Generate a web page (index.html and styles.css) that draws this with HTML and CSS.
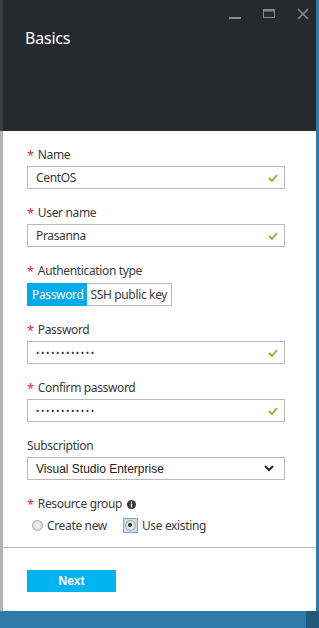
FILE: index.html
```html
<!DOCTYPE html>
<html>
<head>
<meta charset="utf-8">
<link rel="stylesheet" href="styles.css">
</head>
<body>
<div class="blade">
  <header class="head">
    <div class="controls">
      <svg class="ctl" width="14" height="14" viewBox="0 0 14 14"><rect x="1" y="10" width="12" height="2" fill="#85898d"/></svg>
      <svg class="ctl" width="14" height="14" viewBox="0 0 14 14"><rect x="1.5" y="2.5" width="11" height="8" fill="none" stroke="#85898d" stroke-width="1"/><rect x="1" y="2" width="12" height="2.5" fill="#85898d"/></svg>
      <svg class="ctl" width="14" height="14" viewBox="0 0 14 14"><path d="M2 2 L12 12 M12 2 L2 12" stroke="#85898d" stroke-width="1.6"/></svg>
    </div>
    <h1 class="title">Basics</h1>
  </header>
  <main class="body">
    <div class="field">
      <label class="lbl"><span class="req">*</span> Name</label>
      <div class="input"><span class="val">CentOS</span><svg class="ok" width="10" height="8" viewBox="0 0 10 8"><path d="M1 4 L4 7 L9 1" fill="none" stroke="#7cb82f" stroke-width="1.8"/></svg></div>
    </div>
    <div class="field">
      <label class="lbl"><span class="req">*</span> User name</label>
      <div class="input"><span class="val">Prasanna</span><svg class="ok" width="10" height="8" viewBox="0 0 10 8"><path d="M1 4 L4 7 L9 1" fill="none" stroke="#7cb82f" stroke-width="1.8"/></svg></div>
    </div>
    <div class="field">
      <label class="lbl"><span class="req">*</span> Authentication type</label>
      <div class="toggle"><span class="seg on">Password</span><span class="seg">SSH public key</span></div>
    </div>
    <div class="field">
      <label class="lbl"><span class="req">*</span> Password</label>
      <div class="input"><span class="dots">••••••••••••</span><svg class="ok" width="10" height="8" viewBox="0 0 10 8"><path d="M1 4 L4 7 L9 1" fill="none" stroke="#7cb82f" stroke-width="1.8"/></svg></div>
    </div>
    <div class="field">
      <label class="lbl"><span class="req">*</span> Confirm password</label>
      <div class="input"><span class="dots">••••••••••••</span><svg class="ok" width="10" height="8" viewBox="0 0 10 8"><path d="M1 4 L4 7 L9 1" fill="none" stroke="#7cb82f" stroke-width="1.8"/></svg></div>
    </div>
    <div class="field">
      <label class="lbl">Subscription</label>
      <div class="input select"><span class="sel">Visual Studio Enterprise</span><svg class="chev" width="10" height="7" viewBox="0 0 10 7"><path d="M1 1 L5 5 L9 1" fill="none" stroke="#222" stroke-width="2"/></svg></div>
    </div>
    <div class="field last">
      <label class="lbl"><span class="req">*</span> Resource group <svg class="info" width="9" height="9" viewBox="0 0 9 9"><circle cx="4.5" cy="4.5" r="4.5" fill="#3a3a3a"/><rect x="3.8" y="3.6" width="1.4" height="3.6" fill="#fff"/><rect x="3.8" y="1.6" width="1.4" height="1.3" fill="#fff"/></svg></label>
      <div class="radios">
        <span class="radio"><span class="dot"></span>Create new</span>
        <span class="radio sel-r"><span class="focus"><span class="dot checked"></span></span>Use existing</span>
      </div>
    </div>
  </main>
  <footer class="foot">
    <button class="next">Next</button>
  </footer>
</div>
<div class="band"><span class="band-end"></span></div>
</body>
</html>
```
FILE: styles.css
```css
html, body {
  margin: 0;
  padding: 0;
  width: 319px;
  height: 628px;
  overflow: hidden;
  font-family: "Noto Sans", "Open Sans", sans-serif;
}
.blade {
  height: 611px;
  display: flex;
  flex-direction: column;
  border-right: 3px solid #2f7cab;
  box-sizing: border-box;
}
.head {
  height: 131px;
  flex: none;
  background: #262a2f;
  border-left: 3px solid #3a3e42;
  box-sizing: border-box;
  padding: 8px 0 0 22px;
  position: relative;
}
.controls {
  position: absolute;
  top: 7px;
  right: 6px;
  display: flex;
  gap: 20px;
}
.title {
  margin: 20px 0 0;
  font-size: 16px;
  font-weight: normal;
  color: #ffffff;
  line-height: 20px;
  letter-spacing: -0.2px;
}
.body {
  flex: 1;
  background: #fff;
  border-left: 3px solid #b3b3b3;
  padding: 16px 0 0 24px;
  border-bottom: 1px solid #b8b8b8;
  letter-spacing: -0.35px;
}
.field {
  margin-bottom: 16px;
}
.field.last {
  margin-bottom: 0;
}
.lbl {
  display: flex;
  align-items: center;
  gap: 4px;
  height: 16px;
  margin-bottom: 3px;
  font-size: 12px;
  color: #3a3a3a;
  line-height: 16px;
}
.req {
  color: #e0243a;
  font-size: 13px;
}
.info {
  margin-left: 1px;
}
.input {
  width: 258px;
  height: 23px;
  box-sizing: border-box;
  border: 1px solid #b9b9b9;
  display: flex;
  align-items: center;
  padding: 0 6px 0 8px;
  font-size: 12px;
  color: #3a3a3a;
}
.val {
  flex: 1;
}
.dots {
  flex: 1;
  font-size: 9px;
  letter-spacing: 1.6px;
  color: #333;
}
.ok {
  flex: none;
}
.sel {
  flex: 1;
  font-family: "Liberation Sans", Arial, sans-serif;
  font-size: 12px;
  letter-spacing: 0;
  color: #222;
}
.chev {
  margin-right: 4px;
}
.toggle {
  display: inline-flex;
  height: 23px;
  box-sizing: border-box;
  border: 1px solid #b9b9b9;
  font-size: 12px;
  color: #3a3a3a;
}
.seg {
  display: flex;
  align-items: center;
  padding: 0 4px 0 3px;
}
.seg.on {
  background: #00abec;
  color: #fff;
  margin: -1px 0 -1px -1px;
  padding: 0 4px 0 5px;
}
.radios {
  display: flex;
  align-items: center;
  gap: 16px;
  height: 20px;
  margin-top: 3px;
  padding-left: 5px;
  font-size: 12px;
  color: #3a3a3a;
}
.radio {
  display: flex;
  align-items: center;
  gap: 4px;
}
.dot {
  width: 11px;
  height: 11px;
  border-radius: 50%;
  box-sizing: border-box;
  border: 1px solid #a8a8a8;
  background: radial-gradient(circle, #f3f3f3, #d4d4d4);
  display: inline-block;
  position: relative;
}
.dot.checked::after {
  content: "";
  position: absolute;
  left: 2.5px;
  top: 2.5px;
  width: 4px;
  height: 4px;
  border-radius: 50%;
  background: #333;
}
.focus {
  display: flex;
  align-items: center;
  justify-content: center;
  width: 13px;
  height: 13px;
  border: 1px solid #7aa7d6;
  background: #cfe0f3;
}
.foot {
  height: 63px;
  flex: none;
  background: #fff;
  border-left: 3px solid #b3b3b3;
  padding: 20px 0 0 24px;
  box-sizing: border-box;
}
.next {
  width: 89px;
  height: 22px;
  border: none;
  background: #00b5ef;
  color: #fff;
  font-family: "Liberation Sans", Arial, sans-serif;
  font-weight: bold;
  font-size: 12px;
  padding: 0;
}
.band {
  height: 17px;
  background: #2d7ba7;
  display: flex;
  justify-content: flex-end;
}
.band-end {
  width: 13px;
  background: #1f5878;
}
```
